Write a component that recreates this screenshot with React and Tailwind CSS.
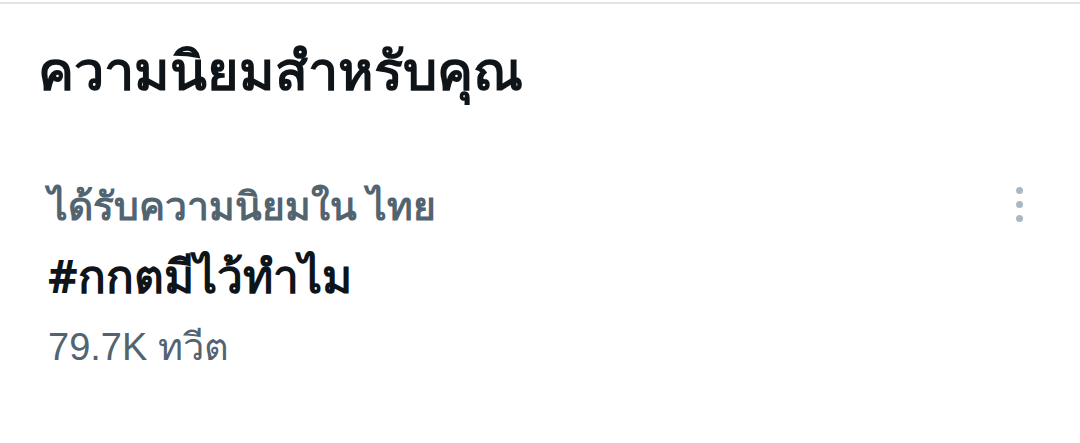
export default function App() {
    return (
        <div
            className="w-[1080px] h-[443px] bg-white overflow-hidden"
            style={{ fontFamily: '"Noto Sans", "DejaVu Sans", sans-serif' }}
        >
            <div className="h-[4px] border-b-2 border-[#e1e4e6]" />
            <h2 className="pl-[38px] pt-[33px] text-[54px] font-bold text-[#0f1419] leading-[64px]">
                ความนิยมสำหรับคุณ
            </h2>
            <TrendRow />
        </div>
    );
}

const TrendRow = () => {
    return (
        <div className="flex justify-between pl-[48px] pr-[57px] pt-[78px]">
            <div className="flex flex-col">
                <span className="text-[39px] font-bold text-[#536471] leading-[52px]">
                    ได้รับความนิยมใน ไทย
                </span>
                <span className="text-[46px] font-bold text-[#0f1419] leading-[88px]">
                    #กกตมีไว้ทำไม
                </span>
                <span
                    className="text-[38px] text-[#536471] leading-[56px]"
                    style={{ fontFamily: '"Liberation Sans", "Noto Sans", sans-serif' }}
                >
                    79.7K ทวีต
                </span>
            </div>
            <div className="flex flex-col gap-[7px] pt-[8px]">
                <span className="w-[7px] h-[7px] rounded-full bg-[#aab8c2]" />
                <span className="w-[7px] h-[7px] rounded-full bg-[#aab8c2]" />
                <span className="w-[7px] h-[7px] rounded-full bg-[#aab8c2]" />
            </div>
        </div>
    );
};
